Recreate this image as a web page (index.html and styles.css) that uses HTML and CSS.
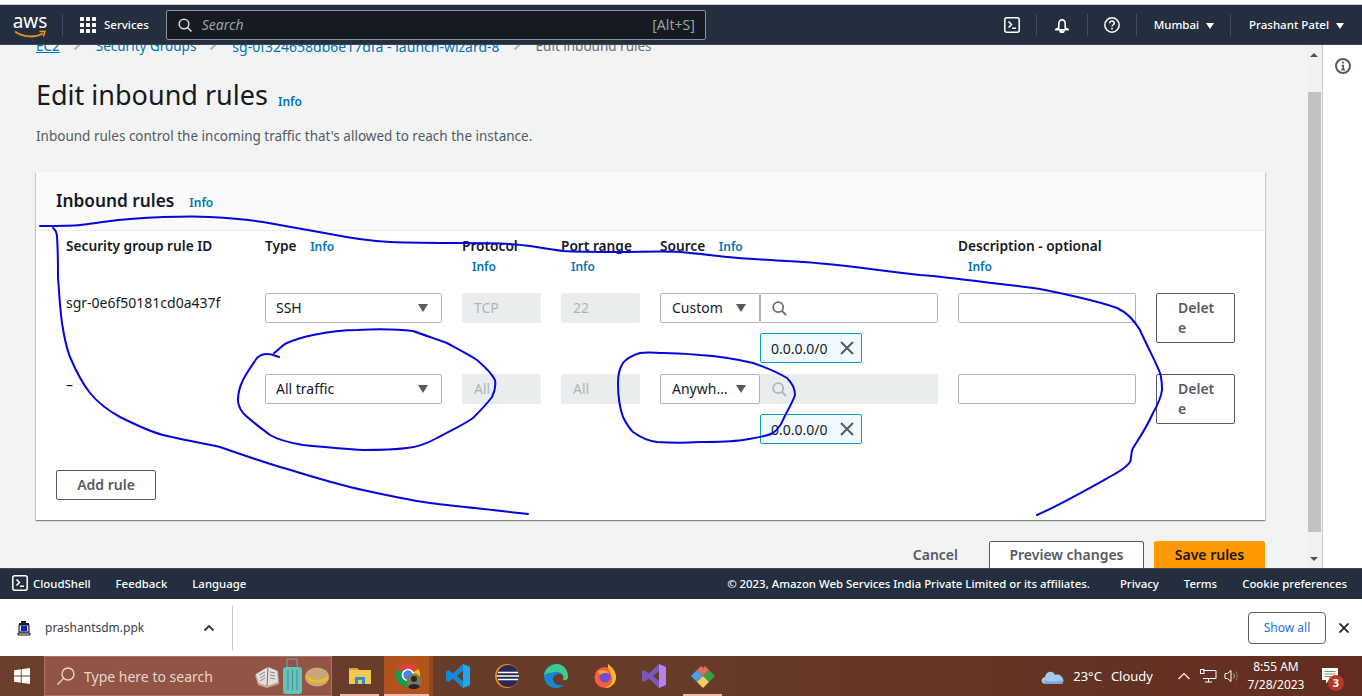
FILE: index.html
```html
<!doctype html>
<html>
<head>
<title>Edit inbound rules</title>
<link rel="stylesheet" href="styles.css">
</head>
<body>
<div class="top-strip"></div>

<!-- console nav -->
<header class="nav">
  <div class="logo">
    <span class="logo-text">aws</span>
    <svg class="logo-smile" width="32" height="9" viewBox="0 0 32 9"><path d="M1 1.5C9 7.5 21 8 29 3.5" fill="none" stroke="#ec9215" stroke-width="1.8"/><path d="M25.5 1.5L31 1.3 29.5 6.5" fill="none" stroke="#ec9215" stroke-width="1.5"/></svg>
  </div>
  <span class="nav-sep sep-logo"></span>
  <svg class="grid-icon" width="16" height="16" viewBox="0 0 16 16" fill="#fff"><rect width="4" height="4" rx=".5"/><rect x="6" width="4" height="4" rx=".5"/><rect x="12" width="4" height="4" rx=".5"/><rect y="6" width="4" height="4" rx=".5"/><rect x="6" y="6" width="4" height="4" rx=".5"/><rect x="12" y="6" width="4" height="4" rx=".5"/><rect y="12" width="4" height="4" rx=".5"/><rect x="6" y="12" width="4" height="4" rx=".5"/><rect x="12" y="12" width="4" height="4" rx=".5"/></svg>
  <span class="nav-services">Services</span>
  <div class="nav-search">
    <svg width="14" height="14" viewBox="0 0 14 14" fill="none" stroke="#d5dbdb" stroke-width="1.5"><circle cx="6" cy="6" r="4.8"/><path d="M9.5 9.5L13.5 13.5"/></svg>
    <span class="nav-search-text">Search</span>
    <span class="nav-shortcut">[Alt+S]</span>
  </div>
  <div class="nav-right">
    <svg class="nav-icon" width="16" height="16" viewBox="0 0 16 16" fill="none" stroke="#fff" stroke-width="1.5"><rect x=".8" y=".8" width="14.4" height="14.4" rx="2"/><path d="M4.5 4.5L7.5 7.5 4.5 10.5M8 11.2H12"/></svg>
    <span class="nav-sep sep-shell"></span>
    <svg class="nav-icon" width="16" height="16" viewBox="0 0 16 16" fill="none" stroke="#fff" stroke-width="1.6"><path d="M4.800 11V7C4.800 1.500 11.200 1.500 11.200 7V11L14.800 12.800H1.200z"/><path d="M6 14C6.300 16 9.700 16 10 14z" fill="#fff"/></svg>
    <span class="nav-sep sep-bell"></span>
    <svg class="nav-icon" width="16" height="16" viewBox="0 0 16 16" fill="none" stroke="#fff" stroke-width="1.5"><circle cx="8" cy="8" r="7.2"/><path d="M5.7 6.2C5.8 3.4 10.3 3.4 10.3 6.1 10.3 7.7 8 7.8 8 9.6"/><path d="M8 10.8V12.4"/></svg>
    <span class="nav-sep sep-help"></span>
    <span class="nav-menu">Mumbai <i class="caret"></i></span>
    <span class="nav-sep sep-region"></span>
    <span class="nav-menu">Prashant Patel <i class="caret"></i></span>
  </div>
</header>

<div class="main">
  <div class="content">
    <nav class="crumbs">
      <a class="crumb-first">EC2</a><i class="slash"></i><a>Security Groups</a><i class="slash"></i><a class="crumb-sg">sg-0f324658db6e17dfa - launch-wizard-8</a><i class="slash"></i><span>Edit inbound rules</span>
    </nav>
    <h1 class="page-title">Edit inbound rules <a class="info">Info</a></h1>
    <p class="page-desc">Inbound rules control the incoming traffic that's allowed to reach the instance.</p>

    <section class="card">
      <div class="card-head">
        <h2>Inbound rules</h2><a class="info">Info</a>
      </div>
      <div class="rules">
        <div class="label">Security group rule ID</div>
        <div class="label">Type <a class="info">Info</a></div>
        <div class="label">Protocol<a class="info info-below">Info</a></div>
        <div class="label">Port range<a class="info info-below">Info</a></div>
        <div class="label">Source <a class="info">Info</a></div>
        <div class="label">Description - optional<a class="info info-below">Info</a></div>
        <div></div>

        <div class="rule-id">sgr-0e6f50181cd0a437f</div>
        <div><div class="select">SSH<i class="arrow"></i></div></div>
        <div><div class="field disabled">TCP</div></div>
        <div><div class="field disabled">22</div></div>
        <div>
          <div class="source">
            <div class="select select-source"><span class="select-text">Custom</span><i class="arrow"></i></div>
            <div class="field search">
              <svg width="15" height="15" viewBox="0 0 15 15" fill="none" stroke="#687078" stroke-width="1.8"><circle cx="6.2" cy="6.2" r="5"/><path d="M10 10L14.2 14.2"/></svg>
            </div>
          </div>
          <div class="token">0.0.0.0/0 <svg width="14" height="14" viewBox="0 0 14 14" stroke="#545b64" stroke-width="2"><path d="M1 1L13 13M13 1L1 13"/></svg></div>
        </div>
        <div><div class="field desc"></div></div>
        <div><button class="btn-delete">Delete</button></div>

        <div class="rule-id rule-new">–</div>
        <div><div class="select">All traffic<i class="arrow"></i></div></div>
        <div><div class="field disabled">All</div></div>
        <div><div class="field disabled">All</div></div>
        <div>
          <div class="source">
            <div class="select select-source"><span class="select-text">Anywhere-IPv4</span><i class="arrow"></i></div>
            <div class="field search disabled">
              <svg width="15" height="15" viewBox="0 0 15 15" fill="none" stroke="#aab7b8" stroke-width="1.8"><circle cx="6.2" cy="6.2" r="5"/><path d="M10 10L14.2 14.2"/></svg>
            </div>
          </div>
          <div class="token">0.0.0.0/0 <svg width="14" height="14" viewBox="0 0 14 14" stroke="#545b64" stroke-width="2"><path d="M1 1L13 13M13 1L1 13"/></svg></div>
        </div>
        <div><div class="field desc"></div></div>
        <div><button class="btn-delete">Delete</button></div>
      </div>
      <button class="btn btn-add">Add rule</button>
    </section>

    <div class="actions">
      <span class="cancel">Cancel</span>
      <button class="btn btn-preview">Preview changes</button>
      <button class="btn btn-save">Save rules</button>
    </div>
  </div>

  <div class="scrollbar">
    <i class="sb-up"></i>
    <div class="sb-thumb"></div>
    <i class="sb-down"></i>
  </div>
  <aside class="side">
    <svg width="16" height="16" viewBox="0 0 16 16" fill="none" stroke="#545b64" stroke-width="2"><circle cx="8" cy="8" r="7"/><path d="M8 3.6V5.6M6.5 7.5H8.2V11.5M6.3 11.6H10" stroke-width="1.7"/></svg>
  </aside>
</div>

<footer class="footer">
  <svg width="16" height="16" viewBox="0 0 16 16" fill="none" stroke="#fff" stroke-width="1.5"><rect x=".8" y=".8" width="14.4" height="14.4" rx="2"/><path d="M4.5 4.5L7.5 7.5 4.5 10.5M8 11.2H12"/></svg>
  <span class="foot-shell">CloudShell</span>
  <span class="foot-link">Feedback</span>
  <span class="foot-link">Language</span>
  <div class="foot-right">
    <span>© 2023, Amazon Web Services India Private Limited or its affiliates.</span>
    <span class="foot-link foot-first">Privacy</span>
    <span class="foot-link">Terms</span>
    <span class="foot-link">Cookie preferences</span>
  </div>
</footer>

<!-- chrome download shelf -->
<div class="shelf">
  <svg class="ppk-icon" width="14" height="16" viewBox="0 0 14 16"><path d="M4 1H9V3H12V5H2V3H4z" fill="#222"/><rect x="2" y="5" width="10" height="7" fill="#ddd" stroke="#111"/><rect x="4" y="6" width="6" height="5" fill="#0a1ee0"/><path d="M1 13H13V15H1z" fill="#eee" stroke="#111"/></svg>
  <span class="shelf-file">prashantsdm.ppk</span>
  <svg class="shelf-chevron" width="12" height="8" viewBox="0 0 12 8" fill="none" stroke="#333" stroke-width="1.8"><path d="M1.5 6.5L6 2 10.5 6.5"/></svg>
  <span class="shelf-sep"></span>
  <button class="show-all">Show all</button>
  <svg class="shelf-close" width="10" height="10" viewBox="0 0 10 10" stroke="#222" stroke-width="1.8"><path d="M.5 .5L9.5 9.5M9.5 .5L.5 9.5"/></svg>
</div>

<!-- windows taskbar -->
<div class="taskbar">
  <div class="start">
    <svg width="16" height="16" viewBox="0 0 16 16" fill="#fff"><path d="M0 2.3L6.8 1.3V7.6H0zM7.7 1.2L16 0V7.6H7.7zM0 8.4H6.8V14.7L0 13.7zM7.7 8.4H16V16L7.7 14.8z"/></svg>
  </div>
  <div class="task-search">
    <svg width="20" height="20" viewBox="0 0 20 20" fill="none" stroke="#eadcd8" stroke-width="1.3"><circle cx="12" cy="8" r="6"/><path d="M7.6 12.4L1.5 18.5"/></svg>
    <span class="task-search-text">Type here to search</span>
    <div class="search-art">
      <svg width="76" height="38" viewBox="0 0 76 38">
        <path d="M1 18L14 10 24 14 25 27 13 31 4 28z" fill="#c9a58a"/><path d="M2 17L14 10 23 14 24 25 13 29 5 26z" fill="#e4e1dc"/><path d="M14 10L13 29" stroke="#7d7068"/><path d="M5 18L11 15M6 21L11 18M6 24L11 21M16 15L21 16M16 18L21 19M16 21L21 22" stroke="#8b8b8b"/>
        <rect x="29" y="10" width="19" height="27" rx="3" fill="#66c3bb"/><path d="M33 10V2H43V10" fill="none" stroke="#7d8a8c" stroke-width="1.500"/><path d="M34 13V33M38.500 13V33M43 13V33" stroke="#439189"/>
        <ellipse cx="63" cy="20" rx="12" ry="9.500" fill="#c9a77a"/><path d="M53 19C57 26 69 26 74 20" fill="none" stroke="#e9bd22" stroke-width="3"/>
      </svg>
    </div>
  </div>
  <div class="task-apps">
    <div class="task-app running">
      <svg width="22" height="20" viewBox="0 0 22 20"><path d="M0 2H8L10 4H22V18H0z" fill="#f5c94e"/><path d="M0 2H8L9 4H0z" fill="#e0a526"/><path d="M6 11H16V18H13V14H9V18H6z" fill="#2a8ed4"/></svg>
    </div>
    <div class="task-app active running">
      <svg width="26" height="26" viewBox="0 0 26 26"><circle cx="12" cy="12" r="12" fill="#dc4437"/><path d="M12 12L22.5 6A12 12 0 0 1 12 24z" fill="#f4c20d"/><path d="M12 12L12 24A12 12 0 0 1 1.500 6z" fill="#0f9d58"/><circle cx="12" cy="12" r="5.500" fill="#4285f4" stroke="#fff" stroke-width="1.500"/><circle cx="18" cy="18" r="7.500" fill="#7c7a5c"/><circle cx="18" cy="16" r="3" fill="#2c241f"/><path d="M12 24C13 20 23 20 24 24L20 26H15z" fill="#23262b"/></svg>
    </div>
    <div class="task-app">
      <svg width="24" height="24" viewBox="0 0 24 24"><path d="M17 0L24 3V21L17 24 7 14.500 2.500 18 0 16.500V7.500L2.500 6 7 9.500zM17 6.500L11 12 17 17.500z" fill="#0f8bd8"/><path d="M17 0L24 3V21L17 24z" fill="#23a6ee"/></svg>
    </div>
    <div class="task-app">
      <svg width="24" height="24" viewBox="0 0 24 24"><circle cx="12" cy="12" r="12" fill="#e68a1e"/><circle cx="13" cy="12" r="11" fill="#2a2859"/><path d="M3 8.500H23M2 12H24M3 15.500H23" stroke="#fff" stroke-width="1.600"/></svg>
    </div>
    <div class="task-app">
      <svg width="24" height="24" viewBox="0 0 24 24"><path d="M24 13C24 5 18 0 12 0 5 0 0 5 0 12 0 19 5 24 12 24 15 24 18 23 20 21 16 22 9 21 9 15 9 11 14 9 17 10 20 11 21 14 20 16 23 16 24 15 24 13z" fill="#1688ce"/><path d="M0 12C1 3 9 0 14 0 20 1 24 6 24 13 24 15 22 17 19 16 21 11 16 7 11 8 5 9 1 9 0 12z" fill="#3fca8f"/></svg>
    </div>
    <div class="task-app">
      <svg width="24" height="24" viewBox="0 0 24 24"><circle cx="12" cy="13.500" r="10.500" fill="#f95e3b"/><path d="M15 0C22 5 25 12 22 18 20 22 16 24 12 24 18 22 21 16 18 10 17 7 14 4 15 0z" fill="#fdb82d"/><circle cx="12" cy="13" r="5.500" fill="#6f4bd8"/><path d="M4 8C8 5 15 6 17 10 13 8 9 9 7 11z" fill="#fca02a"/></svg>
    </div>
    <div class="task-app">
      <svg width="24" height="24" viewBox="0 0 24 24"><path d="M17 0L24 3V21L17 24 7 14.500 2 18 0 16.500V7.500L2 6 7 9.500zM17 7L11 12 17 17z" fill="#7a56bd"/><path d="M17 0L24 3V21L17 24z" fill="#b086e8"/></svg>
    </div>
    <div class="task-app running">
      <svg width="24" height="24" viewBox="0 0 24 24"><path d="M12 12L6 6 10 2 12 4 14 2 18 6z" fill="#e96a5b"/><path d="M12 12L6 6 0 12 6 18z" fill="#4da0e8"/><path d="M12 12L18 6 24 12 18 18z" fill="#3f9c4d"/><path d="M12 12L6 18 12 24 18 18z" fill="#f2cf5a"/></svg>
    </div>
  </div>
  <div class="tray">
    <svg class="tray-cloud" width="24" height="16" viewBox="0 0 24 16"><path d="M4 16C0 16-1 10 4 9 5 3 12 2 14 7 19 5 25 11 21 16z" fill="#a9c8ee"/><path d="M3 12C8 14 16 14 23 12L21 16H4z" fill="#7da6dc"/></svg>
    <span class="tray-temp">23°C</span>
    <span class="tray-sky">Cloudy</span>
    <svg class="tray-up" width="12" height="8" viewBox="0 0 12 8" fill="none" stroke="#fff" stroke-width="1.100"><path d="M.5 7L6 1.500 11.500 7"/></svg>
    <svg class="tray-net" width="17" height="14" viewBox="0 0 17 14" fill="none" stroke="#fff"><path d="M3 1.500H16V9.500H3M5 13H12M8.500 9.500V13"/><rect x=".5" y=".5" width="3.500" height="4"/></svg>
    <svg class="tray-vol" width="16" height="14" viewBox="0 0 16 14" fill="none" stroke="#fff"><path d="M1 4.500H3.500L7 1.500V12.500L3.500 9.500H1z"/><path d="M9.500 4.500C10.500 6 10.500 8 9.500 9.500" stroke="#c9b2aa"/><path d="M12 2.500C13.500 5 13.500 9 12 11.500" stroke="#97796f"/></svg>
    <div class="clock"><span>8:55 AM</span><span>7/28/2023</span></div>
    <div class="notes">
      <svg width="16" height="16" viewBox="0 0 16 16"><path d="M0 0H16V12H7L4 15.500V12H0z" fill="#fff"/><path d="M2.500 3.500H13.500M2.500 6H13.500M2.500 8.500H9" stroke="#8a8a8a"/></svg>
      <span class="badge">3</span>
    </div>
  </div>
</div>

<!-- pen marks drawn over the screenshot -->
<svg class="scribble" width="1362" height="696" viewBox="0 0 1362 696" fill="none" stroke="#0505dc" stroke-width="2" stroke-linecap="round" stroke-linejoin="round">
  <path d="M40 226C60 226 72 226 80 225C100 223 112 220 130 219C160 217 190 216 210 217C230 218 245 219 263 222C285 226 308 230 330 234C350 238 370 241 390 242C415 243 440 243 463 243C490 243 510 243 530 246C542 248 552 250 563 251C580 252 600 252 620 252C640 252 662 251 680 252C705 254 730 258 753 259C780 261 810 262 837 265C865 268 890 272 920 275C935 276 950 278 967 280C990 283 1015 285 1040 289C1065 294 1095 300 1117 308C1128 313 1134 320 1140 330C1147 346 1155 360 1160 373C1162 380 1162 385 1162 390C1161 398 1157 406 1153 413C1147 427 1140 437 1133 448C1130 454 1132 458 1130 462C1126 468 1120 471 1113 475C1088 489 1060 505 1037 515"/>
  <path d="M53 228C57 231 57 234 57 237C58 250 58 264 58 277C59 293 60 308 62 323C64 336 66 347 70 357C76 371 82 383 90 393C99 404 109 411 120 417C134 424 148 431 163 435C182 440 200 442 220 447C240 454 260 461 280 467C308 475 335 484 363 490C385 495 408 500 430 503C462 507 495 510 528 514"/>
  <path d="M274 353C279 350 282 345 287 343C296 339 304 337 313 335C328 332 342 330 357 330C376 329 396 329 413 331C424 335 436 339 447 343C458 349 468 354 477 360C484 366 491 372 495 380C496 386 495 391 492 397C486 405 480 411 473 418C462 426 449 431 437 438C428 443 418 447 407 448C392 450 378 450 363 450C343 449 323 447 303 445C291 443 280 441 270 435C261 428 251 421 243 413C240 409 238 405 238 400C238 393 240 386 243 380C247 372 252 365 257 358C260 355 263 354 267 354C272 354 276 356 279 357"/>
  <path d="M663 353C656 353 648 352 640 353C633 355 627 358 623 363C619 369 618 376 618 383C618 394 619 406 623 417C626 423 629 428 633 432C640 437 648 441 657 442C671 443 686 443 700 442C715 442 729 442 743 440C754 438 765 437 773 433C778 429 781 425 783 420C787 411 792 404 795 395C795 388 792 383 787 378C777 372 765 367 753 363C736 359 718 356 700 355C688 354 675 353 663 353"/>
</svg>
</body>
</html>
```

FILE: styles.css
```css
* { box-sizing: border-box; }

html, body {
  margin: 0;
  height: 696px;
  overflow: hidden;
}

body {
  position: relative;
  display: flex;
  flex-direction: column;
  font-family: "Noto Sans", "Open Sans", sans-serif;
  font-size: 14px;
  color: #16191f;
  background: #fff;
}

a { color: #0073bb; }

.top-strip {
  height: 5px;
  flex: none;
  background: #fff;
  border-bottom: 1px solid #ccc;
}

/* nav */
.nav {
  height: 40px;
  flex: none;
  display: flex;
  align-items: center;
  padding: 0 18px 0 14px;
  background: #232f3e;
  color: #fff;
  border-bottom: 1px solid #414750;
}
.logo {
  width: 32px;
  height: 30px;
  display: flex;
  flex-direction: column;
  align-items: center;
}
.logo-text {
  font-size: 19px;
  line-height: 20px;
  margin-top: 1px;
}
.logo-smile { margin-top: -1px; flex: none; }
.nav-sep {
  width: 1px;
  height: 22px;
  background: #414d5c;
  flex: none;
}
.sep-logo { margin: 0 17px 0 16px; }
.nav-services {
  margin-left: 8px;
  font-size: 11.5px;
  font-weight: 500;
}
.nav-search {
  width: 540px;
  height: 30px;
  margin-left: 17px;
  padding: 0 10px 0 11px;
  display: flex;
  align-items: center;
  background: #161b22;
  border: 1px solid #879596;
  border-radius: 2px;
  font-size: 14px;
}
.nav-search-text {
  margin-left: 10px;
  color: #95a5a6;
  font-style: italic;
}
.nav-shortcut {
  margin-left: auto;
  color: #95a5a6;
}
.nav-right {
  margin-left: auto;
  display: flex;
  align-items: center;
}
.sep-shell { margin: 0 17px 0 16px; }
.sep-bell { margin: 0 16px 0 17px; }
.sep-help { margin: 0 17px 0 16px; }
.sep-region { margin: 0 18px 0 16px; }
.nav-menu {
  font-size: 11.5px;
  font-weight: 500;
  white-space: nowrap;
}
.caret {
  display: inline-block;
  margin-left: 4px;
  border-left: 4px solid transparent;
  border-right: 4px solid transparent;
  border-top: 6px solid #fff;
  vertical-align: 0;
}

/* page */
.main {
  flex: 1;
  min-height: 0;
  display: flex;
  background: #f2f3f3;
}
.content {
  flex: 1;
  min-width: 0;
  overflow: hidden;
  padding: 0 42px 0 36px;
}
.crumbs {
  height: 20px;
  margin-top: -9px;
  display: flex;
  align-items: center;
  gap: 13px;
  font-size: 13.5px;
  color: #687078;
  white-space: nowrap;
}
.crumb-first { text-decoration: underline; }
.crumb-sg { font-size: 14px; }
.slash {
  width: 10px;
  height: 1.5px;
  background: #aab7b8;
  transform: rotate(-45deg);
}
.page-title {
  margin: 20px 0 0;
  font-size: 27px;
  line-height: 38px;
  font-weight: 400;
}
.info {
  font-size: 12px;
  line-height: 1;
  font-weight: 600;
}
.page-title .info { margin-left: 3px; vertical-align: -1px; }
.page-desc {
  margin: 12px 0 26px;
  font-size: 13.5px;
  line-height: 20px;
  color: #545b64;
}

.card {
  height: 348px;
  padding-bottom: 20px;
  background: #fff;
  box-shadow: 0 1px 1px 0 rgba(0,28,36,.3), 1px 1px 1px 0 rgba(0,28,36,.15), -1px 1px 1px 0 rgba(0,28,36,.15);
}
.card-head {
  height: 59px;
  padding: 17px 20px 0;
  background: #fafafa;
  border-bottom: 1px solid #eaeded;
  display: flex;
  align-items: flex-start;
  gap: 15px;
}
.card-head h2 {
  margin: 0;
  font-size: 17.3px;
  line-height: 24px;
  font-weight: 600;
}
.card-head .info { margin-top: 8px; }

.rules {
  display: grid;
  grid-template-columns: 199px 197px 99px 99px 298px 198px 79px;
  grid-template-rows: 62px 81px 81px;
  padding-left: 30px;
}
.label {
  padding-top: 5px;
  font-size: 13.7px;
  line-height: 20px;
  font-weight: 600;
}
.label .info { margin-left: 10px; }
.info-below {
  display: block;
  line-height: 21px;
}
.rule-id { font-size: 14px; line-height: 20px; }
.rule-new { padding-top: 1px; }

.select, .field {
  height: 30px;
  border: 1px solid #aab7b8;
  border-radius: 2px;
  font-size: 14px;
  line-height: 28px;
  background: #fff;
}
.select {
  width: 177px;
  display: flex;
  justify-content: space-between;
  align-items: center;
  padding: 0 13px 0 10px;
}
.arrow {
  flex: none;
  border-left: 5px solid transparent;
  border-right: 5px solid transparent;
  border-top: 8px solid #545b64;
}
.field {
  width: 79px;
  padding: 0 11px;
}
.disabled {
  background: #eaeded;
  border-color: #eaeded;
  color: #aab7b8;
}
.source { display: flex; }
.select-source {
  width: 100px;
  padding-left: 11px;
  padding-right: 13px;
  gap: 6px;
  flex: none;
}
.select-text {
  min-width: 0;
  overflow: hidden;
  text-overflow: ellipsis;
  white-space: nowrap;
}
.search {
  width: 178px;
  padding: 0 11px;
  display: flex;
  align-items: center;
}
.token {
  width: 102px;
  height: 30px;
  margin: 10px 0 0 100px;
  padding: 0 7px 0 10px;
  display: flex;
  align-items: center;
  justify-content: space-between;
  background: #f1faff;
  border: 1px solid #00a1c9;
  border-radius: 2px;
  font-size: 14px;
}
.desc { width: 178px; }

.btn-delete {
  width: 79px;
  height: 50px;
  padding: 4px 17px 4px 21px;
  background: #fff;
  border: 1px solid #545b64;
  border-radius: 2px;
  color: #545b64;
  font: 600 14px/20px "Noto Sans", sans-serif;
  text-align: left;
  word-break: break-all;
}
.btn {
  height: 30px;
  padding: 0;
  background: #fff;
  border: 1px solid #545b64;
  border-radius: 2px;
  color: #545b64;
  font: 600 14px/20px "Noto Sans", sans-serif;
}
.btn-add {
  display: block;
  width: 100px;
  margin: 15px 0 0 20px;
}

.actions {
  margin-top: 21px;
  display: flex;
  justify-content: flex-end;
  align-items: flex-start;
  gap: 10px;
}
.actions .btn { padding-bottom: 2px; }
.cancel {
  margin-right: 21px;
  padding-top: 4px;
  font-size: 14px;
  line-height: 20px;
  font-weight: 600;
  color: #545b64;
}
.btn-preview { width: 155px; }
.actions .btn-save {
  width: 111px;
  background: #ff9900;
  border-color: #ff9900;
  color: #16191f;
}

.scrollbar {
  width: 15px;
  flex: none;
  position: relative;
  background: #f1f1f1;
  padding-top: 47px;
}
.sb-thumb {
  width: 13px;
  height: 440px;
  margin-left: 1px;
  background: #c1c1c1;
}
.sb-up, .sb-down {
  position: absolute;
  left: 3px;
  border-left: 4px solid transparent;
  border-right: 4px solid transparent;
}
.sb-up { top: 8px; border-bottom: 4px solid #505050; }
.sb-down { bottom: 7px; border-top: 4px solid #505050; }
.side {
  width: 40px;
  flex: none;
  padding: 13px 0 0 12px;
  background: #fff;
  border-left: 1px solid #c4c7c7;
}

/* footer */
.footer {
  height: 31px;
  flex: none;
  display: flex;
  align-items: center;
  padding: 0 15px 2px 12px;
  background: #232f3e;
  border-top: 1px solid #414750;
  color: #fff;
  font-size: 11.4px;
  font-weight: 500;
}
.foot-shell { margin-left: 5px; }
.foot-link { margin-left: 25px; }
.foot-right {
  margin-left: auto;
  display: flex;
}
.foot-right .foot-first { margin-left: 30px; }

/* download shelf */
.shelf {
  height: 57px;
  flex: none;
  display: flex;
  align-items: center;
  padding: 0 13px 0 17px;
  background: #fff;
}
.shelf-file {
  margin-left: 14px;
  font-size: 12px;
  color: #3c3c46;
}
.shelf-chevron { margin-left: 59px; }
.shelf-sep {
  width: 1px;
  height: 44px;
  margin-left: 17px;
  background: #c4c4c4;
}
.show-all {
  width: 78px;
  height: 32px;
  margin-left: auto;
  padding: 0;
  background: #fff;
  border: 1px solid #5f6368;
  border-radius: 4px;
  color: #1a73e8;
  font: 12px "Noto Sans", sans-serif;
}
.shelf-close { margin-left: 13px; }

/* taskbar */
.taskbar {
  height: 40px;
  flex: none;
  display: flex;
  align-items: stretch;
  background: linear-gradient(90deg, #6a3f2b, #673a29 50%, #622d20);
  color: #fff;
}
.start {
  width: 44px;
  display: flex;
  align-items: center;
  justify-content: center;
}
.task-search {
  position: relative;
  width: 288px;
  padding-left: 11px;
  display: flex;
  align-items: center;
  background: #925444;
  border: 1px solid #a87568;
  color: #e6d6d1;
}
.task-search-text {
  margin-left: 8px;
  font-size: 14px;
}
.search-art {
  position: absolute;
  right: 1px;
  top: 0;
}
.task-apps {
  display: flex;
  margin-left: 3px;
}
.task-app {
  position: relative;
  width: 49px;
  display: flex;
  align-items: center;
  justify-content: center;
}
.task-app.running::after {
  content: "";
  position: absolute;
  left: 5px;
  right: 5px;
  bottom: 0;
  height: 2px;
  background: #f3b9a8;
}
.task-app.active {
  background: #b2521c;
  box-shadow: inset -4px 0 0 #8f4a22;
}
.task-app.active::after { left: 0; right: 4px; }
.tray {
  margin-left: auto;
  display: flex;
  align-items: center;
  padding-right: 22px;
  font-size: 13px;
}
.tray-temp { margin-left: 8px; }
.tray-sky { margin-left: 9px; }
.tray-up { margin-left: 25px; }
.tray-net { margin-left: 10px; }
.tray-vol { margin-left: 7px; }
.clock {
  width: 72px;
  display: flex;
  flex-direction: column;
  align-items: center;
  font-size: 12px;
  line-height: 18px;
}
.notes {
  position: relative;
  margin-left: 10px;
  width: 18px;
  height: 16px;
}
.badge {
  position: absolute;
  left: 6px;
  top: 7px;
  width: 16px;
  height: 16px;
  border-radius: 50%;
  background: #b5392a;
  font-size: 11px;
  line-height: 16px;
  font-weight: 700;
  text-align: center;
}

/* annotation layer */
.scribble {
  position: absolute;
  left: 0;
  top: 0;
  pointer-events: none;
}
```
